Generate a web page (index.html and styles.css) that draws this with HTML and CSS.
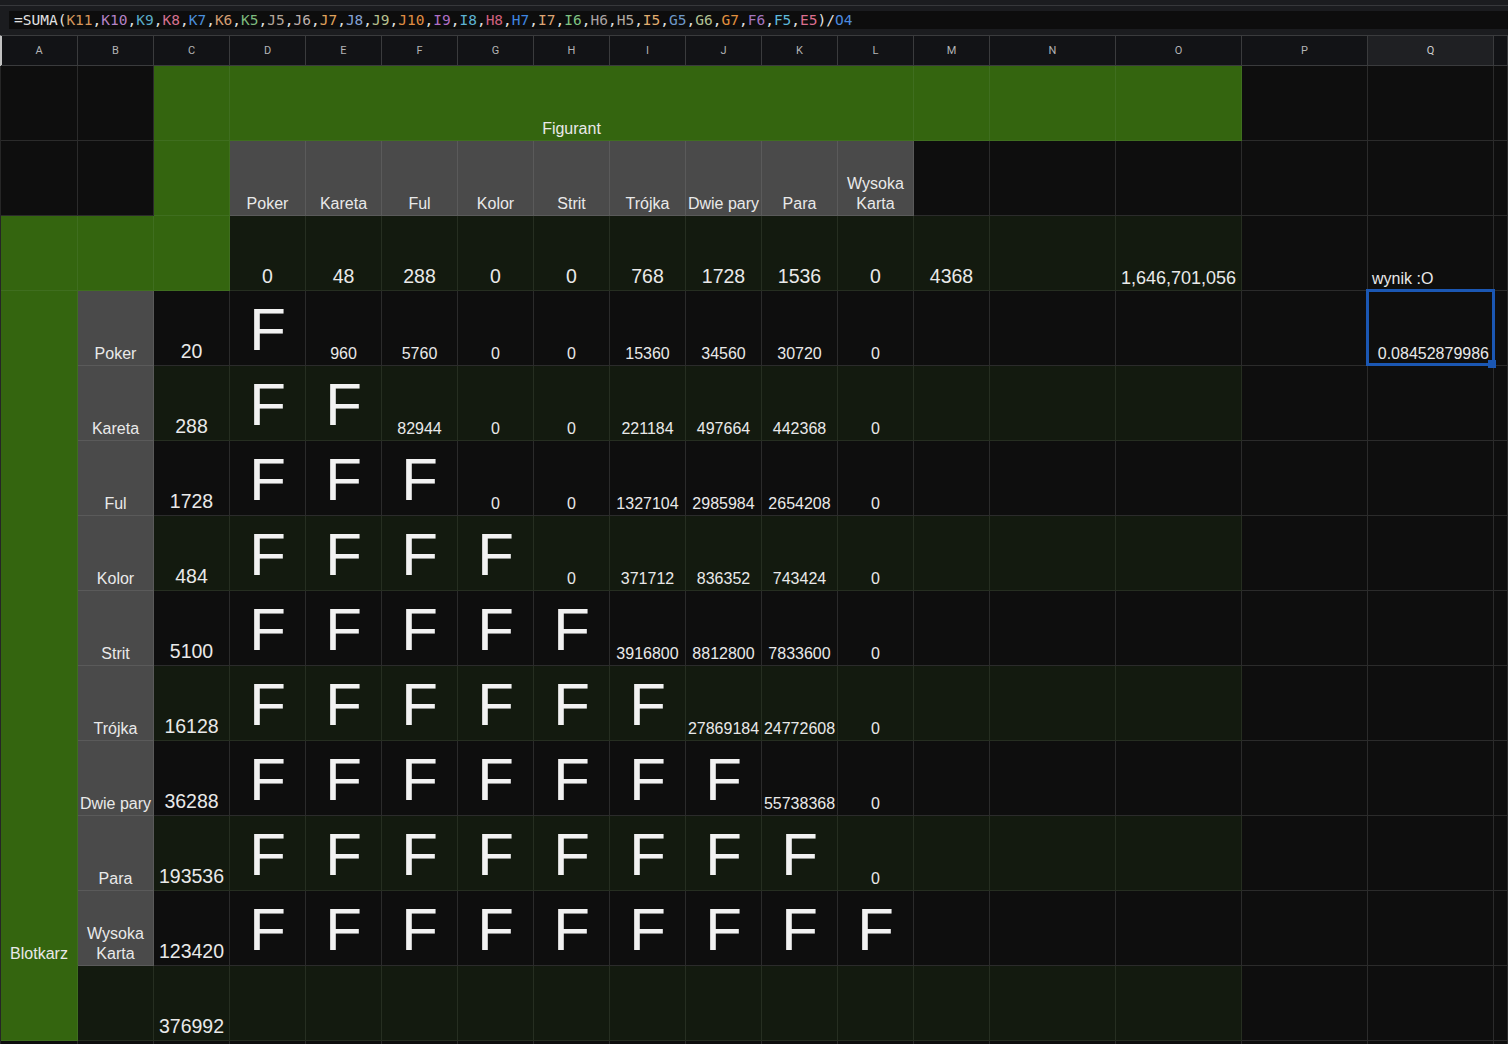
FILE: index.html
```html
<!DOCTYPE html>
<html lang="pl">
<head>
<meta charset="utf-8">
<title>Arkusz</title>
<link rel="stylesheet" href="styles.css">
</head>
<body>
<div class="strip"></div>
<div class="fwrap">
  <div class="fbar">=SUMA(<span class="r1">K11</span>,<span class="r2">K10</span>,<span class="r3">K9</span>,<span class="r4">K8</span>,<span class="r5">K7</span>,<span class="r6">K6</span>,<span class="r7">K5</span>,<span class="r8">J5</span>,<span class="r9">J6</span>,<span class="r10">J7</span>,<span class="r11">J8</span>,<span class="r12">J9</span>,<span class="r13">J10</span>,<span class="r14">I9</span>,<span class="r15">I8</span>,<span class="r16">H8</span>,<span class="r17">H7</span>,<span class="r18">I7</span>,<span class="r19">I6</span>,<span class="r20">H6</span>,<span class="r21">H5</span>,<span class="r22">I5</span>,<span class="r23">G5</span>,<span class="r24">G6</span>,<span class="r25">G7</span>,<span class="r26">F6</span>,<span class="r27">F5</span>,<span class="r28">E5</span>)/<span class="r29">O4</span></div>
</div>

<div class="cols">
  <div class="h first">A</div><div class="h">B</div><div class="h">C</div><div class="h">D</div><div class="h">E</div><div class="h">F</div><div class="h">G</div><div class="h">H</div><div class="h">I</div><div class="h">J</div><div class="h">K</div><div class="h">L</div><div class="h">M</div><div class="h">N</div><div class="h">O</div><div class="h">P</div><div class="h sel-h">Q</div><div class="h"></div>
</div>

<div class="sheet">
  <!-- row 1 -->
  <div class="c k"></div><div class="c k"></div><div class="c g"></div>
  <div class="c g fig"><span>Figurant</span></div>
  <div class="c g"></div><div class="c g"></div><div class="c g"></div>
  <div class="c k"></div><div class="c k"></div><div class="c k"></div>

  <!-- row 2 -->
  <div class="c k"></div><div class="c k"></div><div class="c g"></div>
  <div class="c s"><span>Poker</span></div>
  <div class="c s"><span>Kareta</span></div>
  <div class="c s"><span>Ful</span></div>
  <div class="c s"><span>Kolor</span></div>
  <div class="c s"><span>Strit</span></div>
  <div class="c s"><span>Trójka</span></div>
  <div class="c s"><span>Dwie pary</span></div>
  <div class="c s"><span>Para</span></div>
  <div class="c s"><span>Wysoka<br>Karta</span></div>
  <div class="c k"></div><div class="c k"></div><div class="c k"></div><div class="c k"></div><div class="c k"></div><div class="c k"></div>

  <!-- row 3 -->
  <div class="c g"></div><div class="c g"></div><div class="c g"></div>
  <div class="c d m"><span>0</span></div>
  <div class="c d m"><span>48</span></div>
  <div class="c d m"><span>288</span></div>
  <div class="c d m"><span>0</span></div>
  <div class="c d m"><span>0</span></div>
  <div class="c d m"><span>768</span></div>
  <div class="c d m"><span>1728</span></div>
  <div class="c d m"><span>1536</span></div>
  <div class="c d m"><span>0</span></div>
  <div class="c d m"><span>4368</span></div>
  <div class="c d"></div>
  <div class="c d total"><span>1,646,701,056</span></div>
  <div class="c k"></div>
  <div class="c k left"><span>wynik :O</span></div>
  <div class="c k"></div>

  <!-- row 4 -->
  <div class="c g blot"><span>Blotkarz</span></div>
  <div class="c s"><span>Poker</span></div>
  <div class="c k m"><span>20</span></div>
  <div class="c k f"><span>F</span></div>
  <div class="c k"><span>960</span></div>
  <div class="c k"><span>5760</span></div>
  <div class="c k"><span>0</span></div>
  <div class="c k"><span>0</span></div>
  <div class="c k"><span>15360</span></div>
  <div class="c k"><span>34560</span></div>
  <div class="c k"><span>30720</span></div>
  <div class="c k"><span>0</span></div>
  <div class="c k"></div><div class="c k"></div><div class="c k"></div><div class="c k"></div>
  <div class="c k right sel"><span>0.08452879986</span><div class="selbox"></div><div class="handle"></div></div>
  <div class="c k"></div>

  <!-- row 5 -->
  <div class="c s"><span>Kareta</span></div>
  <div class="c d m"><span>288</span></div>
  <div class="c d f"><span>F</span></div>
  <div class="c d f"><span>F</span></div>
  <div class="c d"><span>82944</span></div>
  <div class="c d"><span>0</span></div>
  <div class="c d"><span>0</span></div>
  <div class="c d"><span>221184</span></div>
  <div class="c d"><span>497664</span></div>
  <div class="c d"><span>442368</span></div>
  <div class="c d"><span>0</span></div>
  <div class="c d"></div><div class="c d"></div><div class="c d"></div>
  <div class="c k"></div><div class="c k"></div><div class="c k"></div>

  <!-- row 6 -->
  <div class="c s"><span>Ful</span></div>
  <div class="c k m"><span>1728</span></div>
  <div class="c k f"><span>F</span></div>
  <div class="c k f"><span>F</span></div>
  <div class="c k f"><span>F</span></div>
  <div class="c k"><span>0</span></div>
  <div class="c k"><span>0</span></div>
  <div class="c k"><span>1327104</span></div>
  <div class="c k"><span>2985984</span></div>
  <div class="c k"><span>2654208</span></div>
  <div class="c k"><span>0</span></div>
  <div class="c k"></div><div class="c k"></div><div class="c k"></div>
  <div class="c k"></div><div class="c k"></div><div class="c k"></div>

  <!-- row 7 -->
  <div class="c s"><span>Kolor</span></div>
  <div class="c d m"><span>484</span></div>
  <div class="c d f"><span>F</span></div>
  <div class="c d f"><span>F</span></div>
  <div class="c d f"><span>F</span></div>
  <div class="c d f"><span>F</span></div>
  <div class="c d"><span>0</span></div>
  <div class="c d"><span>371712</span></div>
  <div class="c d"><span>836352</span></div>
  <div class="c d"><span>743424</span></div>
  <div class="c d"><span>0</span></div>
  <div class="c d"></div><div class="c d"></div><div class="c d"></div>
  <div class="c k"></div><div class="c k"></div><div class="c k"></div>

  <!-- row 8 -->
  <div class="c s"><span>Strit</span></div>
  <div class="c k m"><span>5100</span></div>
  <div class="c k f"><span>F</span></div>
  <div class="c k f"><span>F</span></div>
  <div class="c k f"><span>F</span></div>
  <div class="c k f"><span>F</span></div>
  <div class="c k f"><span>F</span></div>
  <div class="c k"><span>3916800</span></div>
  <div class="c k"><span>8812800</span></div>
  <div class="c k"><span>7833600</span></div>
  <div class="c k"><span>0</span></div>
  <div class="c k"></div><div class="c k"></div><div class="c k"></div>
  <div class="c k"></div><div class="c k"></div><div class="c k"></div>

  <!-- row 9 -->
  <div class="c s"><span>Trójka</span></div>
  <div class="c d m"><span>16128</span></div>
  <div class="c d f"><span>F</span></div>
  <div class="c d f"><span>F</span></div>
  <div class="c d f"><span>F</span></div>
  <div class="c d f"><span>F</span></div>
  <div class="c d f"><span>F</span></div>
  <div class="c d f"><span>F</span></div>
  <div class="c d"><span>27869184</span></div>
  <div class="c d"><span>24772608</span></div>
  <div class="c d"><span>0</span></div>
  <div class="c d"></div><div class="c d"></div><div class="c d"></div>
  <div class="c k"></div><div class="c k"></div><div class="c k"></div>

  <!-- row 10 -->
  <div class="c s"><span>Dwie pary</span></div>
  <div class="c k m"><span>36288</span></div>
  <div class="c k f"><span>F</span></div>
  <div class="c k f"><span>F</span></div>
  <div class="c k f"><span>F</span></div>
  <div class="c k f"><span>F</span></div>
  <div class="c k f"><span>F</span></div>
  <div class="c k f"><span>F</span></div>
  <div class="c k f"><span>F</span></div>
  <div class="c k"><span>55738368</span></div>
  <div class="c k"><span>0</span></div>
  <div class="c k"></div><div class="c k"></div><div class="c k"></div>
  <div class="c k"></div><div class="c k"></div><div class="c k"></div>

  <!-- row 11 -->
  <div class="c s"><span>Para</span></div>
  <div class="c d m"><span>193536</span></div>
  <div class="c d f"><span>F</span></div>
  <div class="c d f"><span>F</span></div>
  <div class="c d f"><span>F</span></div>
  <div class="c d f"><span>F</span></div>
  <div class="c d f"><span>F</span></div>
  <div class="c d f"><span>F</span></div>
  <div class="c d f"><span>F</span></div>
  <div class="c d f"><span>F</span></div>
  <div class="c d"><span>0</span></div>
  <div class="c d"></div><div class="c d"></div><div class="c d"></div>
  <div class="c k"></div><div class="c k"></div><div class="c k"></div>

  <!-- row 12 -->
  <div class="c s"><span>Wysoka<br>Karta</span></div>
  <div class="c k m"><span>123420</span></div>
  <div class="c k f"><span>F</span></div>
  <div class="c k f"><span>F</span></div>
  <div class="c k f"><span>F</span></div>
  <div class="c k f"><span>F</span></div>
  <div class="c k f"><span>F</span></div>
  <div class="c k f"><span>F</span></div>
  <div class="c k f"><span>F</span></div>
  <div class="c k f"><span>F</span></div>
  <div class="c k f"><span>F</span></div>
  <div class="c k"></div><div class="c k"></div><div class="c k"></div>
  <div class="c k"></div><div class="c k"></div><div class="c k"></div>

  <!-- row 13 -->
  <div class="c g"></div>
  <div class="c d"></div>
  <div class="c d m"><span>376992</span></div>
  <div class="c d"></div><div class="c d"></div><div class="c d"></div><div class="c d"></div>
  <div class="c d"></div><div class="c d"></div><div class="c d"></div><div class="c d"></div>
  <div class="c d"></div><div class="c d"></div><div class="c d"></div><div class="c d"></div>
  <div class="c k"></div><div class="c k"></div><div class="c k"></div>

  <!-- row 14 -->
  <div class="c k"></div><div class="c k"></div><div class="c k"></div><div class="c k"></div>
  <div class="c k"></div><div class="c k"></div><div class="c k"></div><div class="c k"></div>
  <div class="c k"></div><div class="c k"></div><div class="c k"></div><div class="c k"></div>
  <div class="c k"></div><div class="c k"></div><div class="c k"></div><div class="c k"></div>
  <div class="c k"></div><div class="c k"></div>
</div>
</body>
</html>
```

FILE: styles.css
```css
* {
  box-sizing: border-box;
  margin: 0;
  padding: 0;
}

html, body {
  background: #0e0e0e;
}

body {
  width: 1508px;
  height: 1044px;
  overflow: hidden;
  font-family: "Liberation Sans", Arial, sans-serif;
  color: #e9e9e9;
}

/* ---------- top chrome ---------- */
.strip {
  height: 6px;
  background: #1b1c1f;
  border-bottom: 1px solid #37383b;
}

.fwrap {
  background: #1b1c1f;
  padding: 5px 0 6px 9px;
}

.fbar {
  height: 18px;
  background: #0d0d0d;
  padding-left: 5px;
  font-family: "DejaVu Sans Mono", "Liberation Mono", monospace;
  font-size: 14.5px;
  line-height: 18px;
  color: #e2e2e2;
  white-space: nowrap;
  overflow: hidden;
}

.r1 { color: #d4965c; }
.r2 { color: #b582c6; }
.r3 { color: #5aacc8; }
.r4 { color: #d6708f; }
.r5 { color: #4b8fde; }
.r6 { color: #d49f74; }
.r7 { color: #7ebb7e; }
.r8 { color: #b4a69a; }
.r9 { color: #bfb0ac; }
.r10 { color: #e0a35c; }
.r11 { color: #84a2d4; }
.r12 { color: #b7c08e; }
.r13 { color: #e08e43; }
.r14 { color: #b06fc4; }
.r15 { color: #5db3d4; }
.r16 { color: #d0607f; }
.r17 { color: #3f86e2; }
.r18 { color: #dea574; }
.r19 { color: #80c282; }
.r20 { color: #aaa2a2; }
.r21 { color: #b2aaa2; }
.r22 { color: #e1ad6f; }
.r23 { color: #6f99c9; }
.r24 { color: #b2c194; }
.r25 { color: #e2913f; }
.r26 { color: #a476c0; }
.r27 { color: #5fb9da; }
.r28 { color: #dc6f8f; }
.r29 { color: #4b8ade; }

/* ---------- column headers ---------- */
.cols {
  display: grid;
  grid-template-columns: 77px repeat(12, 76px) repeat(4, 126px) 1fr;
  height: 31px;
  background: #121316;
  border-top: 1px solid #3a3b3d;
  border-left: 1px solid #c2c2c2;
}

.h {
  display: flex;
  align-items: center;
  justify-content: center;
  border-right: 1px solid #3a3b3d;
  border-bottom: 1px solid #3a3b3d;
  font-family: Roboto, "Liberation Sans", Arial, sans-serif;
  font-size: 11px;
  color: #b3b3b5;
}

.h.first {
  box-shadow: inset 1px 0 0 #c2c2c2;
}

.h.sel-h {
  background: #1f2023;
  color: #cfcfcf;
}

/* ---------- grid ---------- */
.sheet {
  display: grid;
  grid-template-columns: 77px repeat(12, 76px) repeat(4, 126px) 1fr;
  grid-auto-rows: 75px;
  height: 978px;
  overflow: hidden;
  border-left: 1px solid #262626;
}

.c {
  display: flex;
  align-items: flex-end;
  justify-content: center;
  border-right: 1px solid #2b2b2b;
  border-bottom: 1px solid #2b2b2b;
  padding: 0 2px 1px;
  font-size: 16px;
  line-height: 20px;
  white-space: nowrap;
  text-align: center;
}

.k { background: #0e0e0e; border-color: #2b2b2b; }
.g { background: #34650f; border-color: #3f6e1f; }
.s { background: #4a4a4a; border-color: #5a5a5a; }
.d { background: #131a0f; border-color: #262e21; }

.fig { grid-column: span 9; }

.blot {
  grid-row: span 9;
  border-bottom-color: #34650f;
}

.m {
  font-size: 19.5px;
  line-height: 22px;
  padding-bottom: 3px;
}

.f {
  font-size: 60px;
  line-height: 69px;
  color: #f2f2f2;
}

.total {
  justify-content: flex-end;
  font-size: 18px;
  line-height: 20px;
  padding-right: 5px;
  padding-bottom: 2px;
}

.left {
  justify-content: flex-start;
  padding-left: 4px;
}

.right {
  justify-content: flex-end;
  padding-right: 4px;
  padding-left: 0;
}

.sel {
  position: relative;
}

.selbox {
  position: absolute;
  left: -2px;
  top: -2px;
  right: -2px;
  bottom: -1px;
  border: 3px solid #1b57b3;
}

.handle {
  position: absolute;
  right: -3px;
  bottom: -3px;
  width: 8px;
  height: 8px;
  background: #1b57b3;
}
```
